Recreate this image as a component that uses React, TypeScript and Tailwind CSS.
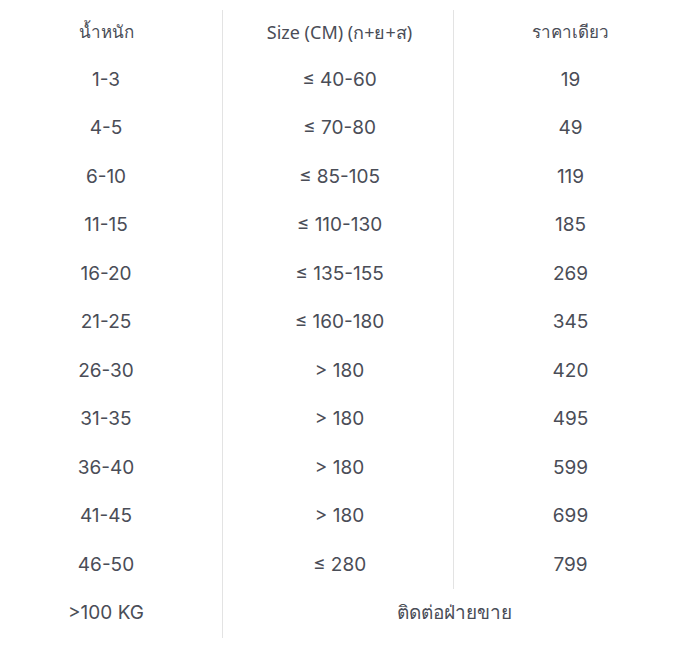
import React from "react";

const rows: [string, string, string][] = [
  ["1-3", "≤ 40-60", "19"],
  ["4-5", "≤ 70-80", "49"],
  ["6-10", "≤ 85-105", "119"],
  ["11-15", "≤ 110-130", "185"],
  ["16-20", "≤ 135-155", "269"],
  ["21-25", "≤ 160-180", "345"],
  ["26-30", "> 180", "420"],
  ["31-35", "> 180", "495"],
  ["36-40", "> 180", "599"],
  ["41-45", "> 180", "699"],
  ["46-50", "≤ 280", "799"],
];

const cell = "flex h-[48.5px] items-center justify-center";
const c1 = `${cell} pr-[10px]`;
const c2 = `${cell} pl-[3px] border-l border-[#e3e3e3]`;
const c3 = `${cell} pl-[10px] border-l border-[#e3e3e3]`;
const noto = { fontFamily: '"Noto Sans", sans-serif' };

export default function App() {
  return (
    <div
      className="min-h-[648px] w-[677px] bg-white pt-[10px] text-[19px] text-[#4a4d57]"
      style={{ fontFamily: 'Inter, "Noto Sans", sans-serif' }}
    >
      <div className="grid grid-cols-[222px_231px_224px]">
        {/* header */}
        <div className={`${c1} !h-[45.5px] text-[17px]`}>น้ำหนัก</div>
        <div className={`${c2} !h-[45.5px] text-[18px]`} style={noto}>
          Size (CM) (ก+ย+ส)
        </div>
        <div className={`${c3} !h-[45.5px] text-[17px]`}>ราคาเดียว</div>

        {rows.map(([w, s, p]) => (
          <React.Fragment key={w}>
            <div className={c1}>{w}</div>
            <div className={c2}>{s}</div>
            <div className={c3}>{p}</div>
          </React.Fragment>
        ))}

        {/* last row spans size + price */}
        <div className={c1}>&gt;100 KG</div>
        <div className={`${cell} col-span-2 pl-[9px] border-l border-[#e3e3e3]`}>ติดต่อฝ่ายขาย</div>
      </div>
    </div>
  );
}
